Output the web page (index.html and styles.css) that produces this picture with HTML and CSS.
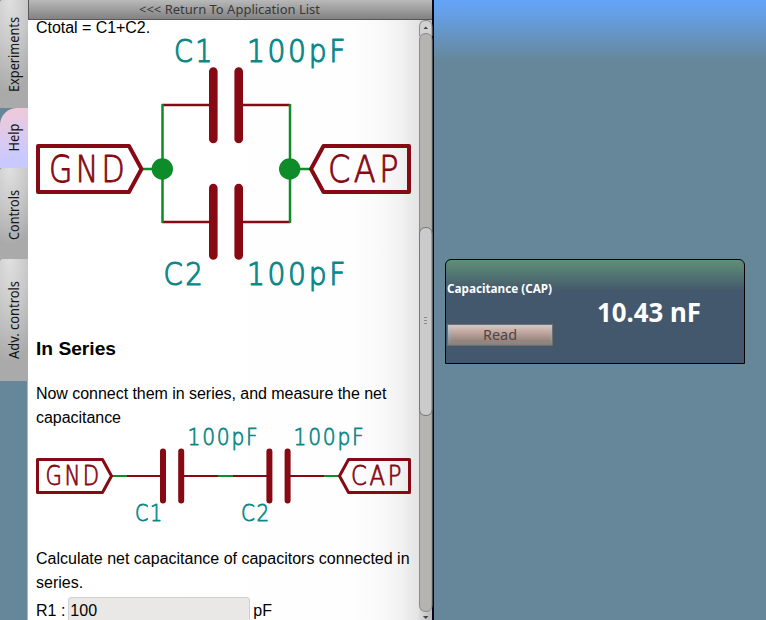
FILE: index.html
```html
<!DOCTYPE html>
<html lang="en">
<head>
<meta charset="utf-8">
<title>Capacitance</title>
<link rel="stylesheet" href="styles.css">
</head>
<body>
<nav class="tabs">
  <div class="tab tab-exp"><svg width="28" height="108"><text transform="translate(19 92) rotate(-90)" textLength="75" lengthAdjust="spacingAndGlyphs">Experiments</text></svg></div>
  <div class="tab tab-help active"><svg width="28" height="60"><text transform="translate(19 43.500) rotate(-90)" textLength="28" lengthAdjust="spacingAndGlyphs">Help</text></svg></div>
  <div class="tab tab-ctl"><svg width="28" height="91"><text transform="translate(19 72) rotate(-90)" textLength="50" lengthAdjust="spacingAndGlyphs">Controls</text></svg></div>
  <div class="tab tab-adv"><svg width="28" height="122"><text transform="translate(19 100) rotate(-90)" textLength="78" lengthAdjust="spacingAndGlyphs">Adv. controls</text></svg></div>
</nav>
<section class="panel">
  <button class="return"><svg width="184" height="18"><text x="0" y="14" textLength="181" lengthAdjust="spacingAndGlyphs">&lt;&lt;&lt; Return To Application List</text></svg></button>
  <div class="view">
    <article class="doc">
      <p class="first">Ctotal = C1+C2.</p>
      <svg class="parallel" viewBox="36 38 375 280" width="375" height="280">
        <g class="lead"><path d="M162 105H212M240 105H290M162 222H212M240 222H290"/></g>
        <g class="wire"><path d="M162.500 104V223M290 104V223M140 169H162M290 169H312"/></g>
        <g class="dot"><circle cx="162.300" cy="169" r="10.700"/><circle cx="289.700" cy="169" r="10.700"/></g>
        <g class="plate"><path d="M213.300 71.500V139M238.700 71.500V139M213.300 188V255.500M238.700 188V255.500"/></g>
        <g class="flag"><path d="M38 146H129L141.500 169L129 192H38ZM409 146H323.500L311 169L323.500 192H409Z"/></g>
        <g class="name big">
          <text x="49" y="181.500" textLength="79" lengthAdjust="spacingAndGlyphs">GND</text>
          <text x="328" y="181.500" textLength="74" lengthAdjust="spacingAndGlyphs">CAP</text>
        </g>
        <g class="value mid">
          <text x="174" y="62" textLength="41" lengthAdjust="spacingAndGlyphs">C1</text>
          <text x="247" y="62" textLength="101" lengthAdjust="spacingAndGlyphs">100pF</text>
          <text x="163.500" y="285" textLength="42" lengthAdjust="spacingAndGlyphs">C2</text>
          <text x="247" y="285" textLength="101" lengthAdjust="spacingAndGlyphs">100pF</text>
        </g>
      </svg>
      <h3>In Series</h3>
      <p class="connect">Now connect them in series, and measure the net capacitance</p>
      <svg class="series" viewBox="36 428 375 100" width="375" height="100">
        <g class="lead thin"><path d="M127 476H163M181 476H218M233 476H269M287 476H325"/></g>
        <g class="wire thin"><path d="M111 476H127M218 476H233M324 476H340"/></g>
        <g class="plate small"><path d="M163 451.500V500.500M181.200 451.500V500.500M269.400 451.500V500.500M287.600 451.500V500.500"/></g>
        <g class="flag small"><path d="M37.500 459.500H102.500L111.500 476L102.500 492.500H37.500ZM409.500 459.500H348.500L339.500 476L348.500 492.500H409.500Z"/></g>
        <g class="name small">
          <text x="45.500" y="485" textLength="56" lengthAdjust="spacingAndGlyphs">GND</text>
          <text x="351" y="485" textLength="53" lengthAdjust="spacingAndGlyphs">CAP</text>
        </g>
        <g class="value small">
          <text x="187.500" y="445" textLength="72" lengthAdjust="spacingAndGlyphs">100pF</text>
          <text x="293.500" y="445" textLength="72" lengthAdjust="spacingAndGlyphs">100pF</text>
          <text x="135" y="521" textLength="29" lengthAdjust="spacingAndGlyphs">C1</text>
          <text x="241" y="521" textLength="30" lengthAdjust="spacingAndGlyphs">C2</text>
        </g>
      </svg>
      <p class="calc">Calculate net capacitance of capacitors connected in series.</p>
      <div class="field"><label for="r1">R1 :</label><input id="r1" value="100"><span>pF</span></div>
    </article>
    <div class="scroll">
      <svg width="14" height="600" viewBox="419 20 14 600">
        <path class="cap" d="M419.500 36V27Q419.500 20.500 426 20.500Q432 20.500 432 27V36"/>
        <path class="arrow" d="M423.500 29H428L425.700 26.500Z"/>
        <path class="trough" d="M419.500 40Q419.500 33.500 426 33.500Q432 33.500 432 40V605Q432 611.500 426 611.500Q419.500 611.500 419.500 605Z"/>
        <path class="thumb" d="M419.500 234Q419.500 227.500 426 227.500Q432 227.500 432 234V409Q432 415.500 426 415.500Q419.500 415.500 419.500 409Z"/>
        <path class="grip" d="M424 317.500H427M424 320.500H427M424 323.500H427"/>
        <path class="arrow" d="M423 616H428.500L425.700 619Z"/>
      </svg>
    </div>
  </div>
</section>
<main class="work">
  <section class="card">
    <div class="left">
      <svg width="107" height="20"><text x="1" y="14" textLength="105" lengthAdjust="spacingAndGlyphs">Capacitance (CAP)</text></svg>
      <button class="read"><svg width="34" height="18"><text x="0" y="14" textLength="34" lengthAdjust="spacingAndGlyphs">Read</text></svg></button>
    </div>
    <svg class="reading" width="104" height="34"><text x="0" y="26" textLength="104" lengthAdjust="spacingAndGlyphs">10.43 nF</text></svg>
  </section>
</main>
</body>
</html>
```
FILE: styles.css
```css
* { box-sizing: border-box; }
body {
  margin: 0; width: 766px; height: 620px; overflow: hidden;
  display: flex; background: #668799;
  font-family: "Liberation Sans", sans-serif;
}
svg { display: block; overflow: visible; }
button { border: 0; padding: 0; margin: 0; }
.tabs { width: 28px; flex: none; border-right: 1px solid #b3b3b3; }
.tab {
  width: 28px; border-radius: 2px 0 0 0;
  background: radial-gradient(ellipse 120% 85% at 35% 0, #e0e0e0, #c9c9c9 50%, #aaa);
  font: 14px "Noto Sans", sans-serif;
}
.tab text { fill: #151515; }
.tab-exp { height: 108px; }
.tab-help { height: 60px; }
.tab-ctl { height: 91px; }
.tab-adv { height: 122px; }
.tab.active { background: linear-gradient(165deg, #f3c9d5, #d9caf0 50%, #c9c9ff 80%); border-radius: 17px 0 0 0; }
.panel { width: 406px; flex: none; display: flex; flex-direction: column; border-right: 2px solid #0b0617; }
.return {
  height: 20px; display: flex; justify-content: center; flex: none;
  background: linear-gradient(#b9b9b9, #828282); border: solid #5a5657; border-width: 0 0 1px 1px;
  font: 13px "Noto Sans", sans-serif;
}
.return text { fill: #383838; }
.view { flex: 1; display: flex; min-height: 0; }
.doc {
  width: 391px; height: 600px; overflow: hidden; padding: 0 8px; font-size: 16px; line-height: 24px; color: #000;
  background: linear-gradient(90deg, #fff 0, #fefefe 320px, #fafafa 350px, #f2f2f2 372px, #e3e3e3 391px);
}
p { margin: 0; letter-spacing: -.04px; }
.first { height: 18px; line-height: 16px; }
h3 { margin: 16px 0 0; height: 48px; font-size: 19.200px; line-height: 30px; }
.connect { height: 46px; }
.calc { margin-top: 19px; height: 49px; letter-spacing: 0; }
.field { display: flex; align-items: center; height: 29px; }
.field input {
  width: 182px; height: 28px; margin: 0 3px; padding: 0 1px;
  border: 1px solid #d2cfcc; border-radius: 3px; background: #e9e8e7;
  font: 16px "Liberation Sans", sans-serif; color: #000;
}
.lead { stroke: #860914; stroke-width: 2.500; }
.wire { stroke: #0d8c29; stroke-width: 2.500; }
.thin { stroke-width: 2; }
.dot { fill: #0d8c29; }
.plate { stroke: #860914; stroke-width: 8.600; stroke-linecap: round; }
.plate.small { stroke-width: 6; }
.flag { fill: none; stroke: #860914; stroke-width: 4; stroke-linejoin: round; }
.flag.small { stroke-width: 3; }
.name, .value { font-family: "DejaVu Sans", sans-serif; font-weight: 200; stroke-linejoin: round; }
.name { fill: #860914; stroke: #860914; }
.value { fill: #0b8888; stroke: #0b8888; }
.big { font-size: 37px; stroke-width: .9; letter-spacing: 4px; }
.mid { font-size: 32px; stroke-width: 1.200; letter-spacing: 3px; }
.name.small { font-size: 26px; stroke-width: .8; letter-spacing: 3px; }
.value.small { font-size: 23px; stroke-width: .8; letter-spacing: 2px; }
.scroll { width: 13px; background: linear-gradient(90deg, #dcdcdc, #bbb); }
.cap { fill: #d2d2d2; stroke: #8b8b89; }
.trough { fill: #b5b4b1; stroke: #8b8b89; }
.thumb { fill: #cbcbcb; stroke: #777; }
.arrow { fill: #444; }
.grip { stroke: #888; }
.work {
  flex: 1; padding: 259px 21px 0 11px;
  background: linear-gradient(#64a3f8 0, #65a0e8 12px, #668799 61px);
}
.card {
  width: 300px; height: 105px; display: flex; border: 1px solid #000; border-radius: 6px 6px 0 0;
  background: linear-gradient(#5f8f78, #43586c 31px);
}
.left { width: 107px; display: flex; flex-direction: column; padding-top: 19px; }
.left text { font: bold 12px "Noto Sans", sans-serif; fill: #fff; }
.read {
  width: 106px; height: 22px; margin: 25px 0 0 1px; display: flex; justify-content: center; align-items: center;
  border: 1px solid #766e6b;
  background: linear-gradient(#d2b9b1, #937f79) 3px 3px / 99px 14px no-repeat, linear-gradient(#cbcbcb, #808080);
}
.left .read text { font: 14px "Noto Sans", sans-serif; fill: #514543; }
.reading { margin: 36px 0 0 44px; }
.reading text { font: bold 26px "Noto Sans", sans-serif; fill: #fff; }
```
